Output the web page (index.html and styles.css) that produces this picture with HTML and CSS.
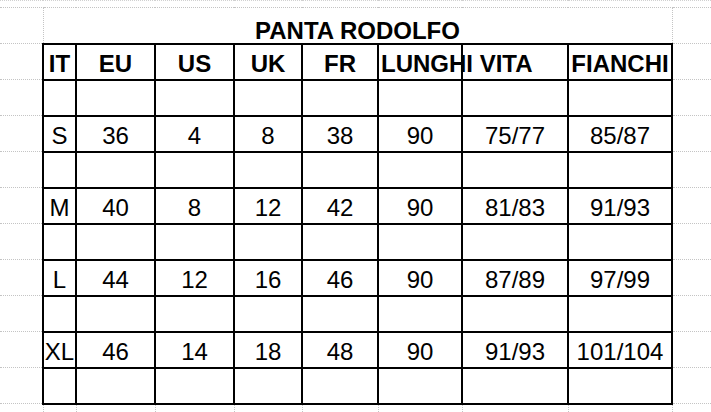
FILE: index.html
```html
<!DOCTYPE html>
<html lang="it">
<head>
<meta charset="utf-8">
<title>PANTA RODOLFO</title>
<link rel="stylesheet" href="styles.css">
</head>
<body>
<table class="sheet">
  <colgroup>
    <col class="w-margin-l">
    <col class="w-it">
    <col class="w-eu">
    <col class="w-us">
    <col class="w-uk">
    <col class="w-fr">
    <col class="w-lun">
    <col class="w-vita">
    <col class="w-fia">
    <col class="w-margin-r">
  </colgroup>
  <tr class="r-top">
    <td></td><td></td><td></td><td></td><td></td><td></td><td></td><td></td><td></td><td></td>
  </tr>
  <tr class="r-title">
    <td class="m"></td>
    <td class="title" colspan="8">PANTA RODOLFO</td>
    <td class="m"></td>
  </tr>
  <tr class="r-row head">
    <td class="m"></td>
    <td class="g">IT</td><td class="g">EU</td><td class="g">US</td><td class="g">UK</td><td class="g">FR</td>
    <td class="g spill">LUNGHI VITA</td><td class="g"></td><td class="g">FIANCHI</td>
    <td class="m"></td>
  </tr>
  <tr class="r-row">
    <td class="m"></td>
    <td class="g"></td><td class="g"></td><td class="g"></td><td class="g"></td><td class="g"></td><td class="g"></td><td class="g"></td><td class="g"></td>
    <td class="m"></td>
  </tr>
  <tr class="r-row">
    <td class="m"></td>
    <td class="g">S</td><td class="g">36</td><td class="g">4</td><td class="g">8</td><td class="g">38</td><td class="g">90</td><td class="g">75/77</td><td class="g">85/87</td>
    <td class="m"></td>
  </tr>
  <tr class="r-row">
    <td class="m"></td>
    <td class="g"></td><td class="g"></td><td class="g"></td><td class="g"></td><td class="g"></td><td class="g"></td><td class="g"></td><td class="g"></td>
    <td class="m"></td>
  </tr>
  <tr class="r-row">
    <td class="m"></td>
    <td class="g">M</td><td class="g">40</td><td class="g">8</td><td class="g">12</td><td class="g">42</td><td class="g">90</td><td class="g">81/83</td><td class="g">91/93</td>
    <td class="m"></td>
  </tr>
  <tr class="r-row">
    <td class="m"></td>
    <td class="g"></td><td class="g"></td><td class="g"></td><td class="g"></td><td class="g"></td><td class="g"></td><td class="g"></td><td class="g"></td>
    <td class="m"></td>
  </tr>
  <tr class="r-row">
    <td class="m"></td>
    <td class="g">L</td><td class="g">44</td><td class="g">12</td><td class="g">16</td><td class="g">46</td><td class="g">90</td><td class="g">87/89</td><td class="g">97/99</td>
    <td class="m"></td>
  </tr>
  <tr class="r-row">
    <td class="m"></td>
    <td class="g"></td><td class="g"></td><td class="g"></td><td class="g"></td><td class="g"></td><td class="g"></td><td class="g"></td><td class="g"></td>
    <td class="m"></td>
  </tr>
  <tr class="r-row">
    <td class="m"></td>
    <td class="g">XL</td><td class="g">46</td><td class="g">14</td><td class="g">18</td><td class="g">48</td><td class="g">90</td><td class="g">91/93</td><td class="g">101/104</td>
    <td class="m"></td>
  </tr>
  <tr class="r-row">
    <td class="m"></td>
    <td class="g"></td><td class="g"></td><td class="g"></td><td class="g"></td><td class="g"></td><td class="g"></td><td class="g"></td><td class="g"></td>
    <td class="m"></td>
  </tr>
  <tr class="r-bottom">
    <td></td><td class="v"></td><td class="v"></td><td class="v"></td><td class="v"></td><td class="v"></td><td class="v"></td><td class="v"></td><td class="v"></td><td class="v"></td>
  </tr>
</table>
</body>
</html>
```

FILE: styles.css
```css
html, body {
  margin: 0;
  padding: 0;
  background: #ffffff;
}

body {
  font-family: "Liberation Sans", Arial, Helvetica, sans-serif;
  color: #000000;
  overflow: hidden;
}

.sheet {
  border-collapse: collapse;
  table-layout: fixed;
  width: 711px;
}

.sheet td {
  padding: 0;
  font-size: 24px;
  line-height: 24px;
  text-align: center;
  white-space: nowrap;
}

.w-margin-l { width: 43px; }
.w-it { width: 33px; }
.w-eu { width: 79px; }
.w-us { width: 79px; }
.w-uk { width: 68px; }
.w-fr { width: 76px; }
.w-lun { width: 84px; }
.w-vita { width: 106px; }
.w-fia { width: 104px; }
.w-margin-r { width: 39px; }

.r-top {
  height: 7px;
}

.r-top td {
  border-top: 1px dotted #d0d0d0;
  border-bottom: 1px dotted #c4c4c4;
}

.r-title {
  height: 36px;
}

.r-title .title {
  font-weight: bold;
  vertical-align: bottom;
  padding-bottom: 0;
  border-left: 1px dotted #c4c4c4;
  border-right: 1px dotted #c4c4c4;
}

.m {
  border-top: 1px dotted #c4c4c4;
  border-bottom: 1px dotted #c4c4c4;
}

.r-row {
  height: 36px;
}

.g {
  border: 2px solid #000000;
  vertical-align: middle;
  padding-top: 4px !important;
}

.head .g {
  font-weight: bold;
}

.head .spill {
  text-align: left;
  padding-left: 2px !important;
  overflow: visible;
}

.r-bottom {
  height: 10px;
}

.r-bottom .v {
  border-left: 1px dotted #c4c4c4;
}
```
